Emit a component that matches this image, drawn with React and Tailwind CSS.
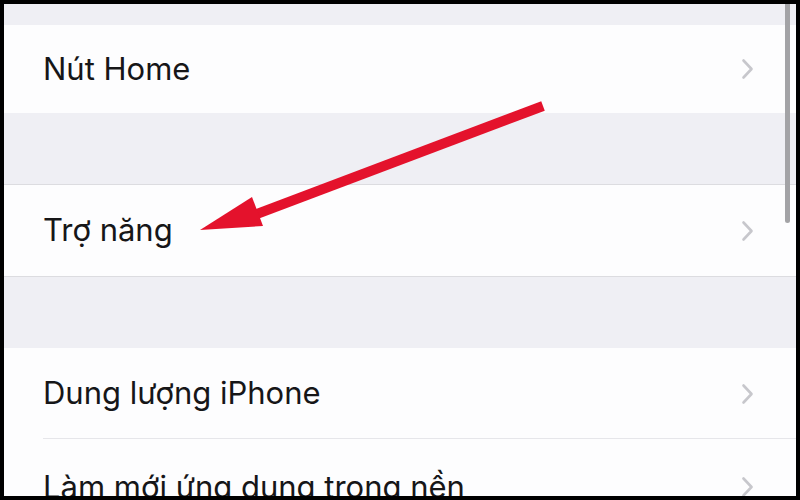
import React from 'react';

const rows = [
  { section: 'Nút Home' },
  { section: 'Trợ năng' },
];

function Chevron() {
  return (
    <svg width="13" height="22" viewBox="0 0 13 22" fill="none">
      <path d="M2.5 2.5 L10.5 11 L2.5 19.5" stroke="#c7c7cc" strokeWidth="2.6" strokeLinecap="round" strokeLinejoin="round" />
    </svg>
  );
}

function Row({ label, height = 'h-[88px]', divider = false }) {
  return (
    <div className={`relative shrink-0 flex items-center justify-between bg-[#fdfdfe] pl-[39px] pr-[42px] ${height}`}>
      <span className="text-[31px] text-[#161618]">{label}</span>
      <Chevron />
      {divider && <div className="absolute bottom-0 left-[39px] right-0 h-px bg-[#e6e6ea]" />}
    </div>
  );
}

export default function App() {
  return (
    <div className="w-[800px] h-[500px] bg-black p-[4px]" style={{ fontFamily: 'Inter, "Noto Sans", sans-serif' }}>
      <div className="relative w-full h-full overflow-hidden bg-[#efeff4] flex flex-col">
        <div className="h-[21px] shrink-0" />
        <Row label={rows[0].section} height="h-[88px]" />
        <div className="h-[72px] shrink-0 border-b border-[#dcdce0]" />
        <Row label={rows[1].section} height="h-[91px]" />
        <div className="h-[72px] shrink-0 border-t border-[#dcdce0]" />
        <Row label="Dung lượng iPhone" height="h-[91px]" divider />
        <Row label="Làm mới ứng dụng trong nền" height="h-[96px]" />

        {/* scroll indicator */}
        <div className="absolute right-[6px] top-0 w-[5px] h-[219px] rounded-b-full bg-[#a3a3a6]" />

        {/* red annotation arrow */}
        <svg className="absolute left-0 top-0" width="792" height="492" viewBox="0 0 792 492">
          <path d="M539 102 L250 211" stroke="#e4122c" strokeWidth="10" strokeLinecap="butt" />
          <polygon points="196,226 248,193 259,222" fill="#e4122c" />
        </svg>
      </div>
    </div>
  );
}
